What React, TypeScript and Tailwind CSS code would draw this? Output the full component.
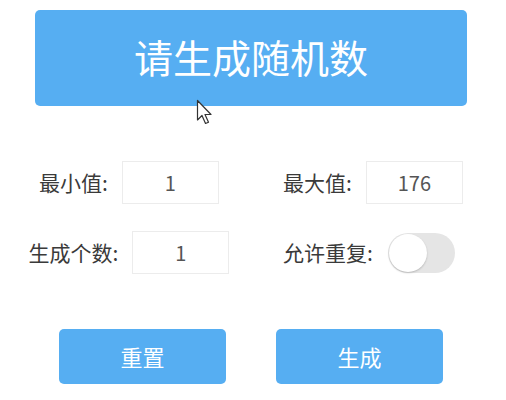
import React, { useState } from "react";

const font = { fontFamily: '"Noto Sans CJK SC", "Noto Sans", sans-serif' };

const Field = ({ label, value }: { label: string; value: string }) => (
  <div className="flex items-center">
    <span className="text-[21px] leading-none text-[#3a3a3a]">{label}</span>
    <div className="ml-[14px] flex h-[43px] w-[97px] items-center justify-center border border-[#ececec] bg-white text-[20px] text-[#555]">
      {value}
    </div>
  </div>
);

const App: React.FC = () => {
  const [repeat, setRepeat] = useState(false);

  return (
    <div className="relative h-[400px] w-[506px] overflow-hidden bg-white" style={font}>
      {/* Header button */}
      <div className="flex justify-center pt-[10px] pr-[4px]">
        <button className="flex h-[96px] w-[432px] items-center justify-center rounded-[5px] bg-[#56aef2] pb-[4px] text-[39px] text-white">
          请生成随机数
        </button>
      </div>

      {/* Form rows */}
      <div className="mt-[55px] flex flex-col gap-[27px]">
        <div className="flex items-center">
          <div className="flex w-[258px] justify-center">
            <Field label="最小值:" value="1" />
          </div>
          <div className="pl-[25px]">
            <Field label="最大值:" value="176" />
          </div>
        </div>
        <div className="flex items-center">
          <div className="flex w-[258px] justify-center">
            <Field label="生成个数:" value="1" />
          </div>
          <div className="flex items-center pl-[25px]">
            <span className="text-[21px] leading-none text-[#3a3a3a]">允许重复:</span>
            <button
              onClick={() => setRepeat(!repeat)}
              className={
                repeat
                  ? "ml-[15px] flex h-[40px] w-[67px] items-center justify-end rounded-full bg-[#56aef2] p-[1px]"
                  : "ml-[15px] flex h-[40px] w-[67px] items-center justify-start rounded-full bg-[#e5e5e5] p-[1px]"
              }
            >
              <span className="h-[38px] w-[38px] rounded-full bg-white shadow-[0_1px_2px_rgba(0,0,0,0.2)]" />
            </button>
          </div>
        </div>
      </div>

      {/* Action buttons */}
      <div className="mt-[55px] flex justify-center gap-[50px] pr-[4px]">
        <button className="h-[55px] w-[167px] rounded-[5px] bg-[#56aef2] text-[22px] text-white">重置</button>
        <button className="h-[55px] w-[167px] rounded-[5px] bg-[#56aef2] text-[22px] text-white">生成</button>
      </div>

      {/* Mouse cursor */}
      <svg className="absolute left-[196px] top-[99px]" width="18" height="28" viewBox="0 0 18 28">
        <path
          d="M1.5 1.5 L1.5 21 L6 16.5 L9.5 24.5 L12.5 23.2 L9 15.5 L15 15.5 Z"
          fill="#fff"
          stroke="#333"
          strokeWidth="1.2"
          strokeLinejoin="round"
        />
      </svg>
    </div>
  );
};

export default App;
